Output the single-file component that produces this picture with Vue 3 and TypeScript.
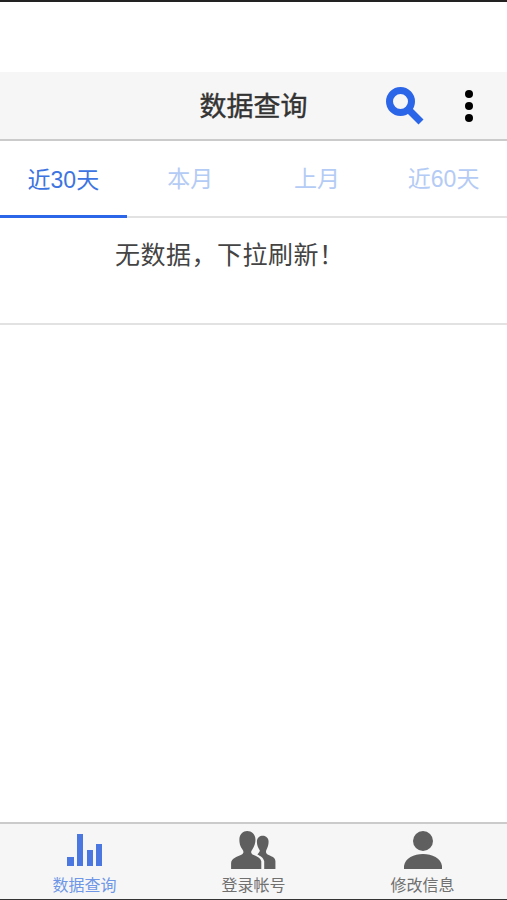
<template>
  <div class="page">
    <div class="status-space"></div>
    <header class="nav-bar">
      <h1 class="nav-title">数据查询</h1>
      <svg class="search-icon" viewBox="0 0 40 40" width="40" height="40">
        <circle cx="14.5" cy="14.5" r="11" fill="none" stroke="#2c66e8" stroke-width="7" />
        <path d="M23 23 L35 35" fill="none" stroke="#2c66e8" stroke-width="7" />
      </svg>
      <div class="more-icon">
        <span></span>
        <span></span>
        <span></span>
      </div>
    </header>
    <nav class="tabs">
      <div
        v-for="(tab, index) in tabs"
        :key="tab"
        class="tab"
        :class="{ active: index === 0 }"
      >
        {{ tab }}
      </div>
    </nav>
    <div class="empty-row">无数据，下拉刷新！</div>
    <main class="content"></main>
    <footer class="tab-bar">
      <div class="bar-item active">
        <div class="bar-icon">
          <svg viewBox="0 0 36 32" width="36" height="32">
            <rect x="0" y="23" width="7" height="9" fill="#4a78e0" />
            <rect x="10" y="0" width="6" height="32" fill="#4a78e0" />
            <rect x="20" y="16" width="6" height="16" fill="#4a78e0" />
            <rect x="29" y="10" width="6" height="22" fill="#4a78e0" />
          </svg>
        </div>
        <span>数据查询</span>
      </div>
      <div class="bar-item">
        <div class="bar-icon">
          <svg viewBox="0 0 46 39" width="45" height="38">
            <path d="M0 39 V33 C0 28 7 26 11 24 C13 23 13 21 12 19.500 C9 16 8.500 12 8.500 9 C8.500 3 12.500 0 16.500 0 C21 0 25 3 25 9 C25 12 24 16 21.500 19.500 C20 21 20.500 23 22 24 C26 26 30 27.500 31 31 V39 Z" fill="#5f5f5f" />
            <path d="M34 39 V31 C33 27 30 25.500 27 24 C28 23 29.500 21 29.500 20 C27.500 17 26.500 14 26.500 11 C26.500 7 29.500 5 32.500 5 C36 5 38.500 7.500 38.500 11 C38.500 14 37.500 17 36 20 C35.500 22 36 23 37.500 24 C40 25.500 45.500 26.500 45.500 31 V39 Z" fill="#5f5f5f" />
          </svg>
        </div>
        <span>登录帐号</span>
      </div>
      <div class="bar-item">
        <div class="bar-icon">
          <svg viewBox="0 0 38 38" width="38" height="38">
            <circle cx="19" cy="10" r="10" fill="#5f5f5f" />
            <path d="M0 38 V35 C1 27 10 23 19 23 C28 23 37 27 38 35 V38 Z" fill="#5f5f5f" />
          </svg>
        </div>
        <span>修改信息</span>
      </div>
    </footer>
  </div>
</template>

<script setup lang="ts">
const tabs: string[] = ['近30天', '本月', '上月', '近60天'];
</script>

<style scoped>
.page {
  display: flex;
  flex-direction: column;
  height: 900px;
  overflow: hidden;
  background: #fff;
  border-top: 2px solid #222;
  border-bottom: 1px solid #333;
  box-sizing: border-box;
  font-family: "Liberation Sans", "Noto Sans CJK SC", sans-serif;
}

.status-space {
  height: 70px;
}

.nav-bar {
  position: relative;
  display: flex;
  justify-content: center;
  align-items: center;
  height: 69px;
  padding-bottom: 3px;
  box-sizing: border-box;
  background: #f6f6f6;
  border-bottom: 2px solid #cbcbcb;
}

.nav-title {
  margin: 0;
  font-size: 27px;
  font-weight: 400;
  -webkit-text-stroke: 0.4px #333;
  color: #333;
}

.search-icon {
  position: absolute;
  left: 386px;
  top: 15px;
}

.more-icon {
  position: absolute;
  left: 465px;
  top: 18px;
  display: flex;
  flex-direction: column;
  gap: 4px;
}

.more-icon span {
  width: 8px;
  height: 8px;
  border-radius: 50%;
  background: #000;
}

.tabs {
  display: flex;
  height: 77px;
  border-bottom: 2px solid #e2e2e2;
  box-sizing: border-box;
}

.tab {
  flex: 1;
  display: flex;
  justify-content: center;
  align-items: center;
  height: 77px;
  padding-bottom: 6px;
  box-sizing: border-box;
  font-size: 23px;
  color: #b4cbf5;
}

.tab.active {
  padding-bottom: 0;
  color: #3d74e2;
  border-bottom: 3px solid #2c66e8;
}

.empty-row {
  height: 107px;
  padding: 21px 0 0 115px;
  box-sizing: border-box;
  border-bottom: 2px solid #e2e2e2;
  font-size: 25px;
  letter-spacing: 0.5px;
  line-height: 32px;
  color: #444;
}

.content {
  flex: 1;
}

.tab-bar {
  display: flex;
  height: 77px;
  box-sizing: border-box;
  background: #f6f6f6;
  border-top: 2px solid #cbcbcb;
}

.bar-item {
  flex: 1;
  display: flex;
  flex-direction: column;
  align-items: center;
  padding-top: 7px;
  font-size: 16px;
  line-height: 22px;
  color: #707070;
}

.bar-icon {
  display: flex;
  justify-content: center;
  align-items: center;
  height: 38px;
  margin-bottom: 6px;
}

.bar-item.active {
  color: #6f97e6;
}
</style>

<style>
html,
body {
  margin: 0;
  background: #fff;
}
</style>
